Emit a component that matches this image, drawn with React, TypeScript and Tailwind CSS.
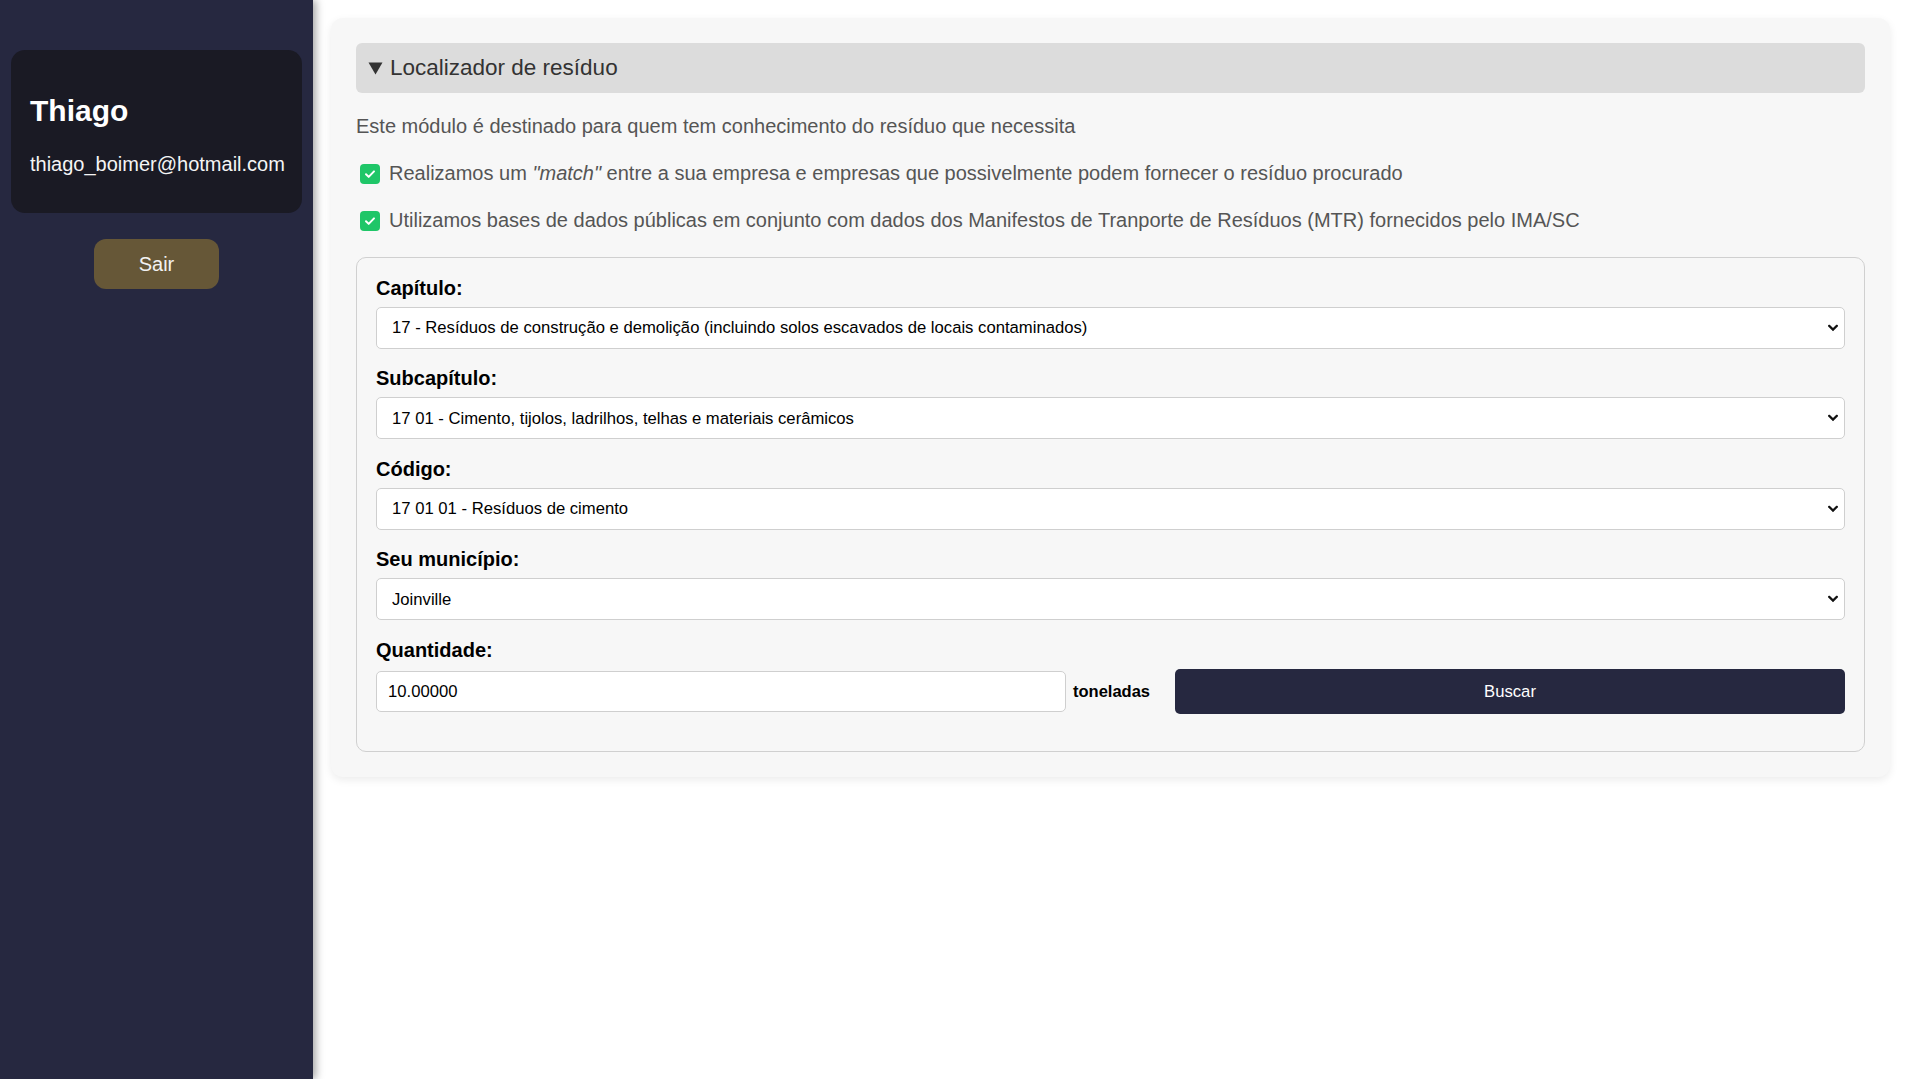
import React from "react";

function Check() {
  return (
    <span className="ml-[4px] mr-[9px] inline-flex h-[20px] w-[20px] shrink-0 items-center justify-center rounded-[4px] bg-[#1fc668]">
      <svg width="14" height="14" viewBox="0 0 14 14" fill="none">
        <path d="M3 7.2l2.7 2.7L11 4.4" stroke="white" strokeWidth="2" strokeLinecap="round" strokeLinejoin="round" />
      </svg>
    </span>
  );
}

function Field({ label, value, first }: { label: string; value: string; first?: boolean }) {
  return (
    <div className={first ? "flex flex-col" : "mt-[18.67px] flex flex-col"}>
      <label className="h-[23px] text-[20px] font-bold leading-[23px] text-black">{label}</label>
      <div className="relative mt-[7px]">
        <select
          defaultValue={value}
          className="h-[42px] w-full appearance-none rounded-[5px] border border-[#cfcfcf] bg-white pl-[15px] pr-[36px] text-[16.67px] text-black outline-none"
        >
          <option value={value}>{value}</option>
        </select>
        <svg
          className="pointer-events-none absolute right-[7px] top-1/2 -translate-y-1/2"
          width="10"
          height="7"
          viewBox="0 0 10 7"
          fill="none"
        >
          <path d="M1.2 1.3L5 5.1l3.8-3.8" stroke="#111" strokeWidth="2.2" strokeLinecap="square" />
        </svg>
      </div>
    </div>
  );
}

export default function App() {
  return (
    <div className="flex min-h-[1079px] w-full bg-white font-['Liberation_Sans',Arial,sans-serif]">
      <aside className="relative z-10 flex w-[313px] shrink-0 flex-col items-center bg-[#262840] pt-[50px] shadow-[3px_0_8px_rgba(0,0,0,0.35)]">
        <div className="w-[291px] rounded-[14px] bg-[#1a1a24] px-[19px] pb-[37.5px] pt-[42.5px] text-white">
          <div className="h-[35px] text-[30px] font-bold leading-[35px]">Thiago</div>
          <div className="mt-[25px] h-[23px] text-[20px] leading-[23px] text-[#f5f5f5]">thiago_boimer@hotmail.com</div>
        </div>
        <button className="mt-[26px] flex h-[50px] w-[125px] items-center justify-center rounded-[12px] bg-[#665737] text-[20px] text-[#f2f2f2]">
          Sair
        </button>
      </aside>

      <main className="flex-1 pl-[18px] pr-[29px] pt-[18px]">
        <div className="rounded-[12px] bg-[#f7f7f7] p-[25px] shadow-[0_3px_8px_rgba(0,0,0,0.08)]">
          <div className="flex h-[50px] items-center rounded-[6px] bg-[#dcdcdc] pl-[12px] text-[22.5px] text-[#333]">
            <svg width="15" height="13" viewBox="0 0 15 13" className="mr-[7px]">
              <path d="M0.5 0.5h14L7.5 12.5z" fill="#333" />
            </svg>
            <span>Localizador de resíduo</span>
          </div>

          <p className="mt-[22px] h-[23px] text-[20px] leading-[23px] text-[#555]">
            Este módulo é destinado para quem tem conhecimento do resíduo que necessita
          </p>
          <p className="mt-[24px] flex h-[23px] items-center text-[20px] leading-[23px] text-[#555]">
            <Check />
            <span>
              Realizamos um <i>"match"</i> entre a sua empresa e empresas que possivelmente podem fornecer o resíduo procurado
            </span>
          </p>
          <p className="mt-[24px] flex h-[23px] items-center text-[20px] leading-[23px] text-[#555]">
            <Check />
            <span>
              Utilizamos bases de dados públicas em conjunto com dados dos Manifestos de Tranporte de Resíduos (MTR) fornecidos pelo IMA/SC
            </span>
          </p>

          <div className="mt-[24.5px] rounded-[10px] border border-[#d0d0d0] p-[19px]">
            <Field first label="Capítulo:" value="17 - Resíduos de construção e demolição (incluindo solos escavados de locais contaminados)" />
            <Field label="Subcapítulo:" value="17 01 - Cimento, tijolos, ladrilhos, telhas e materiais cerâmicos" />
            <Field label="Código:" value="17 01 01 - Resíduos de cimento" />
            <Field label="Seu município:" value="Joinville" />

            <div className="mt-[18.67px] flex flex-col">
              <label className="h-[23px] text-[20px] font-bold leading-[23px] text-black">Quantidade:</label>
              <div className="mb-[18px] mt-[7px] flex h-[45px] items-center">
                <input
                  defaultValue="10.00000"
                  className="h-[41px] w-[690px] rounded-[5px] border border-[#cfcfcf] bg-white pl-[11px] text-[16.67px] text-black outline-none"
                />
                <span className="ml-[7px] text-[16.5px] font-bold text-black">toneladas</span>
                <button className="ml-[25px] flex h-[45px] flex-1 items-center justify-center rounded-[5px] bg-[#262840] text-[16.67px] text-white">
                  Buscar
                </button>
              </div>
            </div>
          </div>
        </div>
      </main>
    </div>
  );
}
